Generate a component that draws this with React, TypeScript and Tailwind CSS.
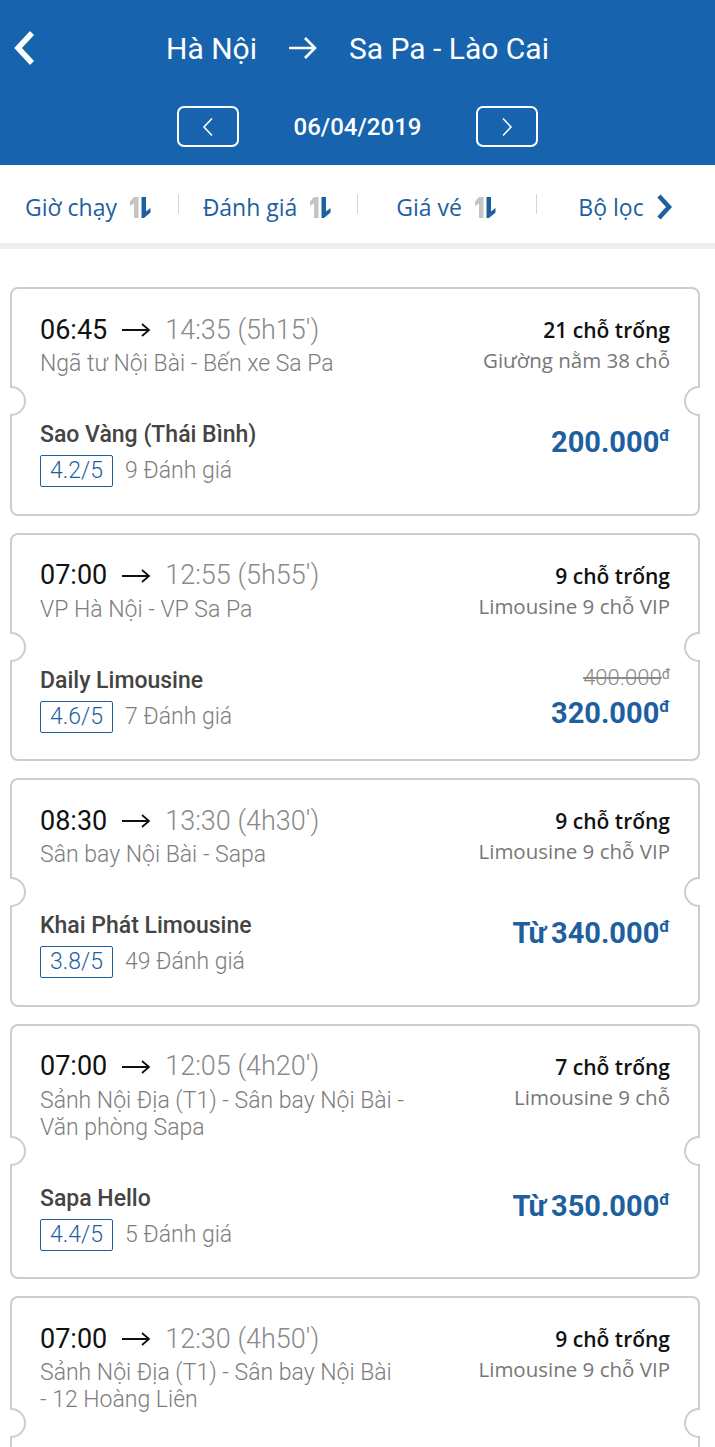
import React from "react";

type Trip = {
  dep: string;
  arr: string;
  route: string[];
  seats: string;
  type: string;
  company: string;
  rating: string;
  reviews: string;
  price: string;
  from?: boolean;
  old?: string;
};

const trips: Trip[] = [
  {
    dep: "06:45",
    arr: "14:35 (5h15′)",
    route: ["Ngã tư Nội Bài - Bến xe Sa Pa"],
    seats: "21 chỗ trống",
    type: "Giường nằm 38 chỗ",
    company: "Sao Vàng (Thái Bình)",
    rating: "4.2/5",
    reviews: "9 Đánh giá",
    price: "200.000",
  },
  {
    dep: "07:00",
    arr: "12:55 (5h55′)",
    route: ["VP Hà Nội - VP Sa Pa"],
    seats: "9 chỗ trống",
    type: "Limousine 9 chỗ VIP",
    company: "Daily Limousine",
    rating: "4.6/5",
    reviews: "7 Đánh giá",
    price: "320.000",
    old: "400.000",
  },
  {
    dep: "08:30",
    arr: "13:30 (4h30′)",
    route: ["Sân bay Nội Bài - Sapa"],
    seats: "9 chỗ trống",
    type: "Limousine 9 chỗ VIP",
    company: "Khai Phát Limousine",
    rating: "3.8/5",
    reviews: "49 Đánh giá",
    price: "340.000",
    from: true,
  },
  {
    dep: "07:00",
    arr: "12:05 (4h20′)",
    route: ["Sảnh Nội Địa (T1) - Sân bay Nội Bài -", "Văn phòng Sapa"],
    seats: "7 chỗ trống",
    type: "Limousine 9 chỗ",
    company: "Sapa Hello",
    rating: "4.4/5",
    reviews: "5 Đánh giá",
    price: "350.000",
    from: true,
  },
  {
    dep: "07:00",
    arr: "12:30 (4h50′)",
    route: ["Sảnh Nội Địa (T1) - Sân bay Nội Bài", "- 12 Hoàng Liên"],
    seats: "9 chỗ trống",
    type: "Limousine 9 chỗ VIP",
    company: "",
    rating: "",
    reviews: "",
    price: "",
  },
];

const HAND = { fontFamily: '"Open Sans", "Noto Sans", sans-serif' };
const ROBO = { fontFamily: 'Roboto, "Liberation Sans", sans-serif' };

function SortIcon() {
  return (
    <svg width="26" height="26" viewBox="0 0 26 26" className="ml-[10px] shrink-0">
      <path d="M7 3 L11.5 3 L11.5 24 L7 24 L7 9.5 L3 12 L3 7.5 Z" fill="#c4c4c4" />
      <path d="M14.5 3 L19 3 L19 17.5 L23.5 14 L23.5 18.5 L17 24 L14.5 24 Z" fill="#1d5f9f" />
    </svg>
  );
}

function Sep() {
  return <div className="w-px h-[20px] bg-[#d4d4d4]" />;
}

function Card({ t }: { t: Trip }) {
  return (
    <div className="relative mx-[10px] w-[690px] rounded-[8px] border-2 border-[#cdcdcd] bg-white pt-[24px] pb-[25px] px-[28px]">
      <div className="absolute top-1/2 -translate-y-1/2 left-[-2px] w-[16px] h-[30px] rounded-r-full border-2 border-l-0 border-[#cdcdcd] bg-white" />
      <div className="absolute top-1/2 -translate-y-1/2 right-[-2px] w-[16px] h-[30px] rounded-l-full border-2 border-r-0 border-[#cdcdcd] bg-white" />
      <div className="flex justify-between">
        <div>
          <div className="flex items-center h-[34px] text-[27px]" style={ROBO}>
            <span className="text-[#111]">{t.dep}</span>
            <svg width="30" height="16" viewBox="0 0 30 16" className="mx-[14px]">
              <path d="M1 8 H28 M21 2 L28 8 L21 14" stroke="#111" strokeWidth="1.8" fill="none" />
            </svg>
            <span className="text-[#8a8a8a] font-light">{t.arr}</span>
          </div>
          <div className="mt-[3px]">
            {t.route.map((r, i) => (
              <div key={i} className="text-[23px] leading-[27px] text-[#7d7d7d] font-light" style={ROBO}>
                {r}
              </div>
            ))}
          </div>
        </div>
        <div className="flex flex-col items-end pt-[2px]" style={HAND}>
          <div className="text-[21px] leading-[30px] font-semibold text-[#111]">{t.seats}</div>
          <div className="text-[20.5px] leading-[30px] text-[#777]">{t.type}</div>
        </div>
      </div>
      {t.company && (
        <div className="flex justify-between mt-[41px]">
          <div style={ROBO}>
            <div className="text-[23px] leading-[34px] font-medium text-[#444]">{t.company}</div>
            <div className="flex items-center mt-[2px]">
              <div className="h-[32px] px-[9px] flex items-center border-[1.5px] border-[#1d5f9f] rounded-[2px] text-[23px] text-[#1d5f9f] font-light">
                {t.rating}
              </div>
              <span className="ml-[12px] text-[23px] text-[#7d7d7d] font-light">{t.reviews}</span>
            </div>
          </div>
          <div className={"flex flex-col items-end " + (t.old ? "" : "mt-[5px]")} style={ROBO}>
            {t.old && (
              <div className="flex items-start h-[30px] pt-[1px] text-[#8a8a8a]">
                <span className="text-[22px] leading-[26px] line-through font-light">{t.old}</span>
                <span className="text-[14px] leading-none mt-[2px]">đ</span>
              </div>
            )}
            <div className="flex items-start h-[38px] text-[#1d5f9f] font-bold">
              {t.from && <span className="text-[29px] leading-[38px] mr-[6px] tracking-[-1px]">Từ</span>}
              <span className="text-[29px] leading-[38px]">{t.price}</span>
              <span className="text-[17px] leading-none mt-[4px]">đ</span>
            </div>
          </div>
        </div>
      )}
      {!t.company && <div className="h-[110px]" />}
    </div>
  );
}

export default function App() {
  return (
    <div className="w-[715px] h-[1447px] overflow-hidden bg-white" style={ROBO}>
      <div className="bg-[#1763ae] h-[165px] relative text-white">
        <div className="flex items-center h-[96px]">
          <div className="w-[48px] pl-[12px] flex items-center">
            <svg width="26" height="36" viewBox="0 0 26 36">
              <path d="M20 3 L6 18 L20 33" stroke="white" strokeWidth="5.5" fill="none" strokeLinejoin="miter" />
            </svg>
          </div>
          <div className="flex-1 flex items-center justify-center pr-[48px] text-[30px]">
            <span>Hà Nội</span>
            <svg width="30" height="24" viewBox="0 0 30 24" className="mx-[31px]">
              <path d="M1 12 H27 M17 2 L27 12 L17 22" stroke="white" strokeWidth="2.6" fill="none" />
            </svg>
            <span>Sa Pa - Lào Cai</span>
          </div>
        </div>
        <div className="flex items-center justify-center gap-[52px] mt-[10px]">
          <div className="w-[62px] h-[41px] border-2 border-white rounded-[7px] flex items-center justify-center">
            <svg width="14" height="20" viewBox="0 0 14 20">
              <path d="M11 1.5 L3 10 L11 18.5" stroke="white" strokeWidth="1.6" fill="none" />
            </svg>
          </div>
          <div className="text-[24px] font-medium w-[133px] text-center">06/04/2019</div>
          <div className="w-[62px] h-[41px] border-2 border-white rounded-[7px] flex items-center justify-center">
            <svg width="14" height="20" viewBox="0 0 14 20">
              <path d="M3 1.5 L11 10 L3 18.5" stroke="white" strokeWidth="1.6" fill="none" />
            </svg>
          </div>
        </div>
      </div>

      <div className="h-[78px] flex items-center text-[23px] text-[#1d5f9f]" style={HAND}>
        <div className="flex-1 flex items-center justify-center pt-[6px]">
          <span>Giờ chạy</span>
          <SortIcon />
        </div>
        <Sep />
        <div className="flex-1 flex items-center justify-center pt-[6px]">
          <span>Đánh giá</span>
          <SortIcon />
        </div>
        <Sep />
        <div className="flex-1 flex items-center justify-center pt-[6px]">
          <span>Giá vé</span>
          <SortIcon />
        </div>
        <Sep />
        <div className="flex-1 flex items-center justify-center pt-[6px]">
          <span>Bộ lọc</span>
          <svg width="20" height="28" viewBox="0 0 20 28" className="ml-[10px]">
            <path d="M5 3 L15 14 L5 25" stroke="#1d5f9f" strokeWidth="4.5" fill="none" />
          </svg>
        </div>
      </div>
      <div className="h-[6px] bg-[#efefef]" />

      <div className="pt-[38px] pb-[20px] flex flex-col gap-[17px]">
        {trips.map((t, i) => (
          <Card key={i} t={t} />
        ))}
      </div>
    </div>
  );
}
